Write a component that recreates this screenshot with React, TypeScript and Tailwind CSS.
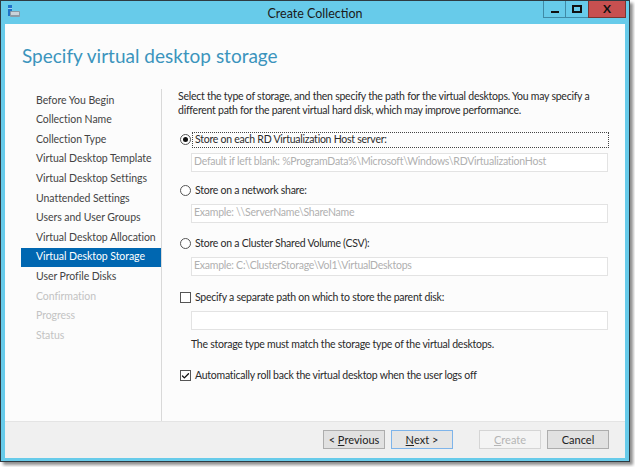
import { Check } from "lucide-react";

const steps = [
  { label: "Before You Begin", state: "done" },
  { label: "Collection Name", state: "done" },
  { label: "Collection Type", state: "done" },
  { label: "Virtual Desktop Template", state: "done" },
  { label: "Virtual Desktop Settings", state: "done" },
  { label: "Unattended Settings", state: "done" },
  { label: "Users and User Groups", state: "done" },
  { label: "Virtual Desktop Allocation", state: "done" },
  { label: "Virtual Desktop Storage", state: "active" },
  { label: "User Profile Disks", state: "done" },
  { label: "Confirmation", state: "off" },
  { label: "Progress", state: "off" },
  { label: "Status", state: "off" },
];

function Radio({ checked }: { checked?: boolean }) {
  return (
    <span className="flex h-[11px] w-[11px] shrink-0 items-center justify-center rounded-full border border-[#555] bg-white">
      {checked && <span className="h-[5px] w-[5px] rounded-full bg-[#111]" />}
    </span>
  );
}

function Box({ checked }: { checked?: boolean }) {
  return (
    <span className="flex h-[11px] w-[11px] shrink-0 items-center justify-center border border-[#555] bg-white">
      {checked && <Check size={10} strokeWidth={3.5} className="text-[#111]" />}
    </span>
  );
}

function Field({ placeholder }: { placeholder?: string }) {
  return (
    <div className="ml-[13px] mt-[5px] flex h-[19px] w-[417px] items-center whitespace-nowrap border border-[#e3e3e3] bg-white px-[2px] text-[#b0b0b0]">
      {placeholder}
    </div>
  );
}

function Btn({ children, variant }: { children: React.ReactNode; variant?: "default" | "disabled" }) {
  const cls =
    variant === "default"
      ? "border-[#7eb4ea] bg-[#e5e5e5] text-[#222]"
      : variant === "disabled"
        ? "border-[#d5d5d5] bg-[#f4f4f4] text-[#b5b5b5]"
        : "border-[#adadad] bg-[#e1e1e1] text-[#222]";
  return (
    <div className={`flex h-[19px] w-[62px] items-center justify-center whitespace-nowrap border ${cls}`}>
      {children}
    </div>
  );
}

export default function App() {
  return (
    <div className="h-[467px] w-[635px] bg-white" style={{ fontFamily: 'Lato, "Noto Sans", sans-serif' }}>
      <div className="flex h-[462px] w-[630px] flex-col border border-[#2e3b42] bg-[#67cbea] shadow-[3px_3px_3px_rgba(0,0,0,0.45)]">
        {/* title bar */}
        <div className="flex h-[23px] items-start">
          <div className="w-[86px]">
            <svg width="14" height="14" viewBox="0 0 14 14" className="ml-[6px] mt-[4px]">
              <rect x="1" y="0" width="4" height="11" fill="#1e73c8" />
              <rect x="1" y="3" width="4" height="1" fill="#9fd0f5" />
              <rect x="3" y="6" width="10" height="6" rx="1" fill="#8a9aa5" />
              <rect x="4" y="7" width="8" height="3" fill="#c9d3da" />
            </svg>
          </div>
          <div className="flex-1 pt-[4px] text-center text-[12.5px] text-[#1a1a1a]">Create Collection</div>
          <div className="flex h-[17px] w-[86px]">
            <div className="flex w-[23px] items-center justify-center border border-t-0 border-[#3f8aa6]">
              <span className="mt-[5px] h-[2px] w-[8px] bg-[#111]" />
            </div>
            <div className="flex w-[22px] items-center justify-center border-b border-[#3f8aa6]">
              <span className="h-[8px] w-[10px] border-2 border-[#111]" />
            </div>
            <div className="flex w-[38px] items-center justify-center border border-t-0 border-[#7a3530] bg-[#c75050] text-[12px] font-bold text-[#111]">
              X
            </div>
          </div>
        </div>

        {/* body */}
        <div className="mx-[4px] flex flex-1 flex-col bg-[#fcfcfc] text-[10.5px] tracking-[-0.25px]">
          <div className="h-[64px] pl-[17px] pt-[18px] text-[19px] tracking-normal text-[#3b94bd]">
            Specify virtual desktop storage
          </div>

          <div className="flex h-[333px]">
            <div className="mt-[1px] w-[157px] shrink-0 border-r border-[#d9d9d9]">
              <div className="flex flex-col pl-[16px] pt-[2px]">
                {steps.map((s) => (
                  <div
                    key={s.label}
                    className={`flex h-[19.6px] items-center whitespace-nowrap pl-[15px] text-[10.5px] tracking-[-0.05px] ${
                      s.state === "active"
                        ? "bg-[#0067b1] text-white"
                        : s.state === "off"
                          ? "text-[#c3c3c3]"
                          : "text-[#444]"
                    }`}
                  >
                    {s.label}
                  </div>
                ))}
              </div>
            </div>

            <div className="flex-1 pl-[16px] pt-[1px] text-[#2a2a2a]">
              <p className="whitespace-nowrap leading-[14px]">
                Select the type of storage, and then specify the path for the virtual desktops. You may specify a
                <br />
                different path for the parent virtual hard disk, which may improve performance.
              </p>

              <div className="mt-[15px] flex h-[16px] items-center gap-[1px] pl-[2px]">
                <Radio checked />
                <span className="flex h-[16px] w-[417px] items-center border border-dotted border-[#444] pl-[2px]">
                  Store on each RD Virtualization Host server:
                </span>
              </div>
              <Field placeholder="Default if left blank: %ProgramData%\Microsoft\Windows\RDVirtualizationHost" />

              <div className="mt-[11px] flex h-[16px] items-center gap-[4px] pl-[2px]">
                <Radio />
                <span>Store on a network share:</span>
              </div>
              <Field placeholder="Example: \\ServerName\ShareName" />

              <div className="mt-[13px] flex h-[16px] items-center gap-[4px] pl-[2px]">
                <Radio />
                <span>Store on a Cluster Shared Volume (CSV):</span>
              </div>
              <Field placeholder="Example: C:\ClusterStorage\Vol1\VirtualDesktops" />

              <div className="mt-[14px] flex h-[16px] items-center gap-[4px] pl-[2px]">
                <Box />
                <span>Specify a separate path on which to store the parent disk:</span>
              </div>
              <Field />

              <div className="mt-[7px] pl-[13px] leading-[14px]">
                The storage type must match the storage type of the virtual desktops.
              </div>

              <div className="mt-[17px] flex h-[16px] items-center gap-[4px] pl-[2px]">
                <Box checked />
                <span>Automatically roll back the virtual desktop when the user logs off</span>
              </div>
            </div>
          </div>

          <div className="mt-auto flex h-[37px] items-center justify-end gap-[6px] border-t border-[#e4e4e4] bg-[#f0f0f0] pr-[16px] text-[11px] tracking-normal">
            <Btn>
              &lt;&nbsp;<u>P</u>revious
            </Btn>
            <Btn variant="default">
              <u>N</u>ext&nbsp;&gt;
            </Btn>
            <div className="w-[14px]" />
            <Btn variant="disabled">
              <u>C</u>reate
            </Btn>
            <Btn>Cancel</Btn>
          </div>
        </div>
        <div className="h-[4px]" />
      </div>
    </div>
  );
}
